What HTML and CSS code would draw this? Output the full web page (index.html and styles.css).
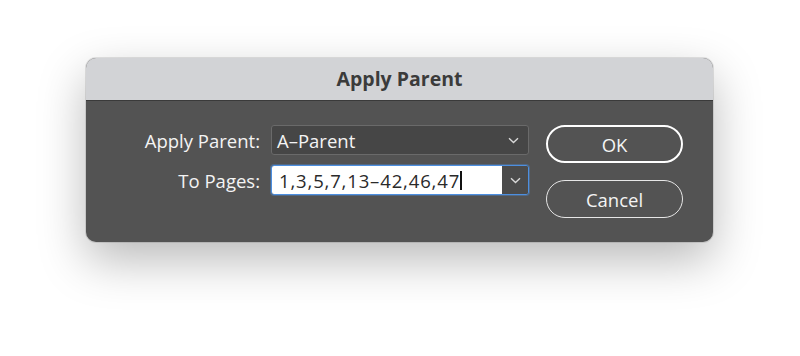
FILE: index.html
```html
<!DOCTYPE html>
<html lang="en">
<head>
    <meta charset="UTF-8">
    <title>Apply Parent</title>
    <link rel="stylesheet" href="styles.css">
</head>
<body>
    <div class="dialog">
        <div class="title-bar">Apply Parent</div>

        <div class="dialog-body">
            <!-- Fields -->
            <div class="fields">
                <div class="field-row">
                    <label class="field-label">Apply Parent:</label>
                    <div class="select">
                        <span>A–Parent</span>
                        <svg class="chevron" width="11" height="7" viewBox="0 0 11 7"><path d="M1 1.2 L5.5 5.5 L10 1.2" fill="none" stroke="#d8d8d8" stroke-width="1.4"/></svg>
                    </div>
                </div>
                <div class="field-row">
                    <label class="field-label">To Pages:</label>
                    <div class="combo">
                        <div class="combo-text">1,3,5,7,13–42,46,47<span class="caret"></span></div>
                        <div class="combo-btn">
                            <svg class="chevron" width="11" height="7" viewBox="0 0 11 7"><path d="M1 1.2 L5.5 5.5 L10 1.2" fill="none" stroke="#d8d8d8" stroke-width="1.4"/></svg>
                        </div>
                    </div>
                </div>
            </div>

            <!-- Buttons -->
            <div class="buttons">
                <button class="btn btn-default">OK</button>
                <button class="btn">Cancel</button>
            </div>
        </div>
    </div>
</body>
</html>
```

FILE: styles.css
```css
html, body {
    margin: 0;
    height: 100%;
}
body {
    background-color: #fff;
    font-family: "Open Sans", sans-serif;
    padding-top: 58px;
    box-sizing: border-box;
}
.dialog {
    width: 627px;
    margin-left: 86px;
    border-radius: 10px;
    overflow: hidden;
    background-color: #535353;
    box-shadow: 0 18px 48px rgba(0, 0, 0, 0.28), 0 0 0 1px rgba(0, 0, 0, 0.1);
}
.title-bar {
    height: 43px;
    line-height: 42px;
    background-color: #d2d3d6;
    border-bottom: 1px solid #3a3a3a;
    box-sizing: border-box;
    text-align: center;
    font-size: 19.5px;
    font-weight: 700;
    color: #3b3b3b;
}
.dialog-body {
    display: flex;
    gap: 17px;
    padding: 24px 30px 24px 0;
}
.fields {
    display: flex;
    flex-direction: column;
    gap: 10px;
}
.field-row {
    display: flex;
    align-items: center;
    gap: 11px;
}
.field-label {
    width: 174px;
    text-align: right;
    font-size: 18.5px;
    color: #f4f4f4;
}
.select {
    width: 258px;
    height: 30px;
    box-sizing: border-box;
    display: flex;
    align-items: center;
    justify-content: space-between;
    padding: 0 9px 0 5px;
    background-color: #464646;
    border: 1px solid #6a6a6a;
    border-radius: 3px;
    font-size: 18.5px;
    color: #f4f4f4;
}
.combo {
    width: 258px;
    height: 30px;
    box-sizing: border-box;
    display: flex;
    border: 1px solid #4d8fe0;
    border-radius: 3px;
    overflow: hidden;
    box-shadow: 0 0 0 1px rgba(77, 143, 224, 0.35);
}
.combo-text {
    flex: 1;
    display: flex;
    align-items: center;
    padding-left: 7px;
    background-color: #fff;
    font-size: 18.5px;
    letter-spacing: 0.85px;
    color: #2a2a2a;
}
.caret {
    display: inline-block;
    width: 2px;
    height: 19px;
    margin-left: 0;
    background-color: #111;
}
.combo-btn {
    width: 26px;
    display: flex;
    align-items: center;
    justify-content: center;
    background-color: #4b4b4b;
}
.buttons {
    display: flex;
    flex-direction: column;
    gap: 17px;
}
.btn {
    width: 137px;
    height: 38px;
    border: 1.5px solid #e6e6e6;
    border-radius: 19px;
    background: transparent;
    color: #f4f4f4;
    font-family: inherit;
    font-size: 18.5px;
}
.btn-default {
    border: 2px solid #fff;
}
```
